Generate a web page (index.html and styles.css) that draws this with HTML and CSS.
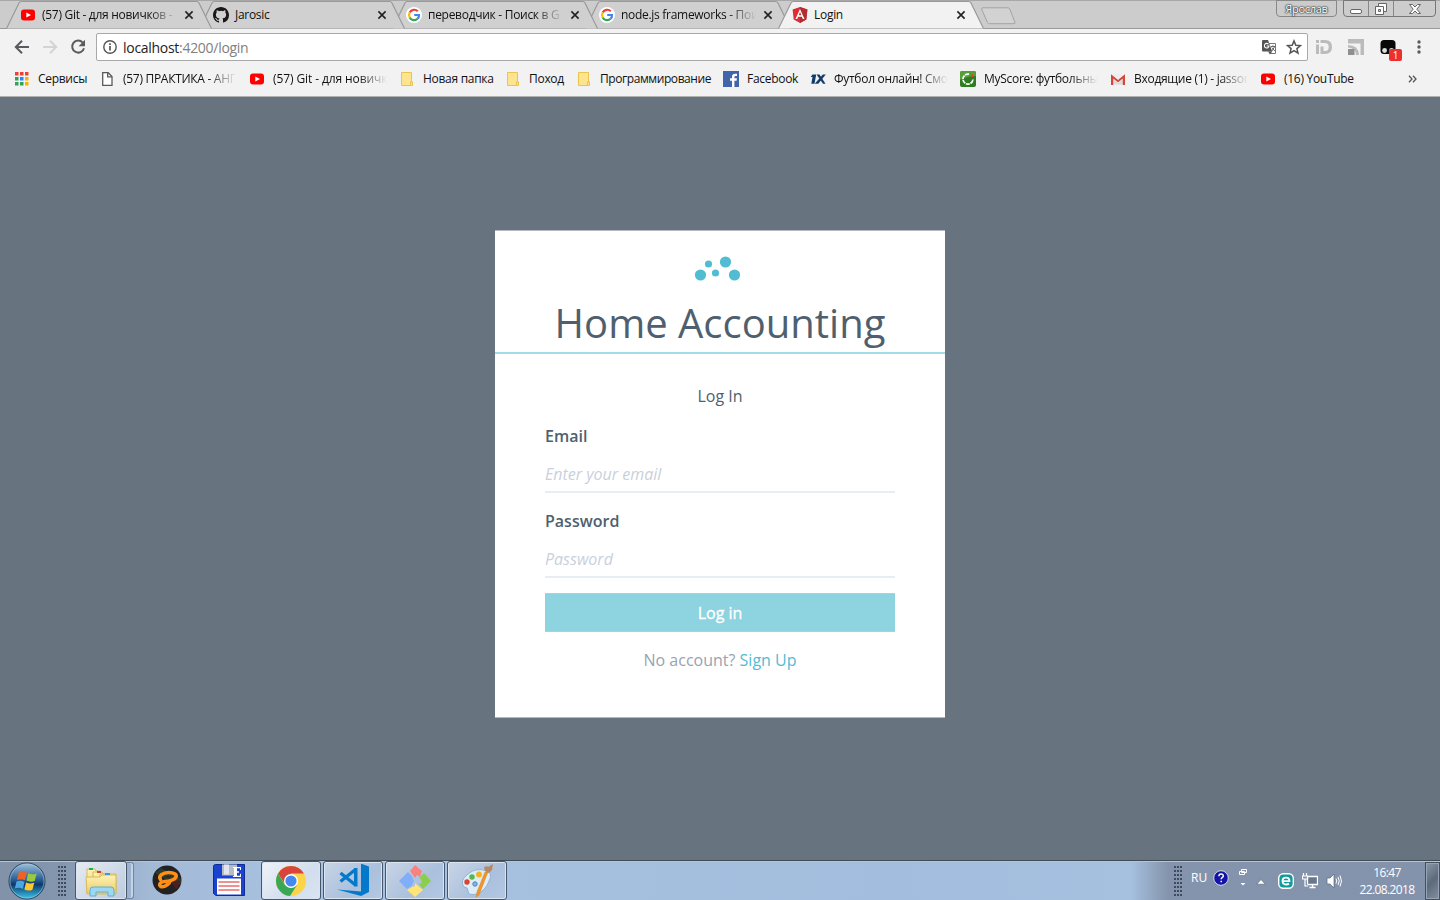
FILE: index.html
```
<!DOCTYPE html>
<html lang="ru">
<head>
<meta charset="utf-8">
<title>Login</title>
<link rel="stylesheet" href="styles.css">
</head>
<body>
<svg class="defs" width="0" height="0">
  <defs>
    <symbol id="yt" viewBox="0 0 16 16"><rect x="1" y="2.5" width="14" height="11" rx="3" fill="#f00"/><path d="M6.3 5.4 11 8 6.3 10.6z" fill="#fff"/></symbol>
    <symbol id="google" viewBox="0 0 16 16"><circle cx="8" cy="8" r="8" fill="#fff"/><g fill="none" stroke-width="2.2"><path d="M11.8 4.3A5 5 0 0 0 3.7 5.6" stroke="#ea4335"/><path d="M3.7 5.6a5 5 0 0 0 0 4.8" stroke="#fbbc05"/><path d="M3.7 10.4a5 5 0 0 0 7.9 1.4" stroke="#34a853"/><path d="M11.6 11.8A5 5 0 0 0 13 8H8.2" stroke="#4285f4"/></g></symbol>
    <symbol id="close" viewBox="0 0 10 10"><path d="M1.4 1.4 8.6 8.6M8.6 1.4 1.4 8.6" stroke="currentColor" stroke-width="1.6"/></symbol>
    <symbol id="folder" viewBox="0 0 16 16"><path d="M2.5 1.5h10v9.3h1v3.7h-11z" fill="#ffe48f" stroke="#e9c44f"/><path d="M11.5 14v-3.2h1.6" fill="none" stroke="#e9c44f"/></symbol>
    <symbol id="tabshape" viewBox="0 0 206 29"><path d="M.5 28.5 13 3q.8-1.5 2.5-1.5h175q1.7 0 2.5 1.5l12.5 25.5" fill="currentColor" stroke="#999" stroke-width="1.2"/></symbol>
    <linearGradient id="gloss" x1="0" y1="0" x2="0" y2="1"><stop offset="0" stop-color="#9fc0dc"/><stop offset=".45" stop-color="#2c6196"/><stop offset=".6" stop-color="#0c3969"/><stop offset="1" stop-color="#3dc7ee"/></linearGradient>
    <linearGradient id="file" x1="0" y1="0" x2="0" y2="1"><stop offset="0" stop-color="#fdf3b5"/><stop offset="1" stop-color="#eccb63"/></linearGradient>
  </defs>
</svg>
<div class="screen">
  <header class="browser">
    <div class="tabstrip">
      <div class="tab tab-1"><svg class="shape"><use href="#tabshape"/></svg><svg class="fav"><use href="#yt"/></svg><span class="title fade">(57) Git - для новичков -</span><svg class="x"><use href="#close"/></svg></div>
      <div class="tab tab-2"><svg class="shape"><use href="#tabshape"/></svg><svg class="fav" viewBox="0 0 16 16"><path fill="#191717" d="M8 0C3.58 0 0 3.58 0 8c0 3.54 2.29 6.53 5.47 7.59.4.07.55-.17.55-.38 0-.19-.01-.82-.01-1.49-2.01.37-2.53-.49-2.69-.94-.09-.23-.48-.94-.82-1.13-.28-.15-.68-.52-.01-.53.63-.01 1.08.58 1.23.82.72 1.21 1.87.87 2.33.66.07-.52.28-.87.51-1.07-1.78-.2-3.64-.89-3.64-3.95 0-.87.31-1.59.82-2.15-.08-.2-.36-1.02.08-2.12 0 0 .67-.21 2.2.82a7.6 7.6 0 0 1 4 0c1.53-1.04 2.2-.82 2.2-.82.44 1.1.16 1.92.08 2.12.51.56.82 1.27.82 2.15 0 3.07-1.87 3.75-3.65 3.95.29.25.54.73.54 1.48 0 1.07-.01 1.93-.01 2.2 0 .21.15.46.55.38A8.01 8.01 0 0 0 16 8c0-4.42-3.58-8-8-8z"/></svg><span class="title">Jarosic</span><svg class="x"><use href="#close"/></svg></div>
      <div class="tab tab-3"><svg class="shape"><use href="#tabshape"/></svg><svg class="fav"><use href="#google"/></svg><span class="title fade">переводчик - Поиск в G</span><svg class="x"><use href="#close"/></svg></div>
      <div class="tab tab-4"><svg class="shape"><use href="#tabshape"/></svg><svg class="fav"><use href="#google"/></svg><span class="title fade">node.js frameworks - Пои</span><svg class="x"><use href="#close"/></svg></div>
      <div class="tab active"><svg class="shape"><use href="#tabshape"/></svg><svg class="fav" viewBox="0 0 16 16"><path d="M8 0 15.4 2.6 14.3 12.4 8 16 1.7 12.4.6 2.6z" fill="#dd2c34"/><path d="M8 0 15.4 2.6 14.3 12.4 8 16z" fill="#b52b32"/><path d="M8 1.9 3.5 12h1.7l.9-2.3h3.8l.9 2.3h1.7zm0 3.2 1.3 3.2H6.7z" fill="#fff"/></svg><span class="title">Login</span><svg class="x"><use href="#close"/></svg></div>
      <svg class="newtab" viewBox="0 0 36 18"><path d="M3 .8h25q1.2 0 1.7 1L35 15.4q.4 1.3-1 1.3H9.5q-1.4 0-2-1.2L1.6 2.2Q1.4.8 3 .8z" fill="#d2d2d2" stroke="#a3a3a3"/></svg>
      <div class="user">Ярослав</div>
      <div class="winbtns">
        <span><svg width="14" height="16" viewBox="0 0 14 16"><rect x="1.5" y="8.5" width="11" height="4" rx="1.5" fill="#fff" stroke="#666"/></svg></span>
        <span><svg width="14" height="16" viewBox="0 0 14 16"><path d="M4.500 2.500h8v8h-8z" fill="#fff" stroke="#666"/><path d="M1.500 5.500h8v8h-8z" fill="#fff" stroke="#666"/><path d="M4.500 8.500h2v2h-2z" fill="#ccc" stroke="#666"/></svg></span>
        <span class="wide"><svg width="14" height="16" viewBox="0 0 14 16"><path d="M1.500 3.500h3L7 6l2.500-2.500h3L8.800 8.200l3.700 4.300h-3L7 10l-2.500 2.500h-3l3.700-4.300z" fill="#fff" stroke="#666"/></svg></span>
      </div>
    </div>
    <div class="toolbar">
      <svg class="nav" viewBox="0 0 16 16"><path d="M15 8H2M8 1.700 1.800 8 8 14.300" fill="none" stroke="#5a5a5f" stroke-width="2"/></svg>
      <svg class="nav" viewBox="0 0 16 16"><path d="M1 8h13M8 1.700 14.200 8 8 14.300" fill="none" stroke="#d3d3d5" stroke-width="2"/></svg>
      <svg class="nav" viewBox="0 0 16 16"><path d="M12.700 3.600A6 6 0 1 0 14 9.200" fill="none" stroke="#5a5a5f" stroke-width="2"/><path d="M15 .8v6.400H8.600z" fill="#5a5a5f"/></svg>
      <div class="omnibox">
        <svg class="info" viewBox="0 0 14 14"><circle cx="7" cy="7" r="6.200" fill="none" stroke="#555" stroke-width="1.400"/><path d="M7 6v4.500M7 3.300v1.700" stroke="#555" stroke-width="1.700"/></svg>
        <span class="url">localhost<i>:4200/login</i></span>
        <svg class="translate" viewBox="0 0 15 15"><path d="M7 3.500h6.500v10H8" fill="#fff" stroke="#777"/><path d="M0 1q0-1 1-1h5l4.200 11.500H1q-1 0-1-1z" fill="#555"/><path d="M6 11.500h4.200L8 14.500z" fill="#555"/><path d="M6.500 4.200A2.300 2.300 0 1 0 7 6H4.700" fill="none" stroke="#fff" stroke-width="1.100"/><path d="M8.800 6.500h4.400M11 5.300v1.200M9.500 11.500l3-4.500M9.800 7.500l3 3.500" stroke="#666" fill="none"/></svg>
        <svg class="star" viewBox="0 0 16 16"><path d="m8 1.900 1.800 4.300 4.700.4-3.600 3 1.100 4.600L8 11.700l-4 2.500 1.100-4.600-3.600-3 4.700-.4z" fill="none" stroke="#555" stroke-width="1.500"/></svg>
      </div>
      <svg class="ext id" viewBox="0 0 16 14"><path d="M0 4.500h3V14H0zM0 0h3v3H0z" fill="#bbb"/><path d="M4.500 0H9q7 0 7 7t-7 7H4.500V6.500h3v4.500H9q3.700 0 3.700-4T9 3H4.500z" fill="#bbb"/></svg>
      <svg class="ext feed" viewBox="0 0 16 16"><path d="M0 0h16v16h-3.500V4.500H0z" fill="#bbb"/><path d="M0 6q10.500 0 11 10H8Q7.500 9 0 8.500z" fill="#bbb"/><path d="M0 10h6.500v6H0z" fill="#8f8f8f"/></svg>
      <div class="ext monkey"><svg viewBox="0 0 16 16" width="16" height="16"><rect x=".5" y="1" width="15" height="14" rx="3.500" fill="#080808"/><circle cx="4.600" cy="11.500" r="2.400" fill="#ddd"/><circle cx="11.500" cy="11.500" r="2.400" fill="#ddd"/></svg><b>1</b></div>
      <svg class="dots" viewBox="0 0 4 14"><circle cx="2" cy="2" r="1.700"/><circle cx="2" cy="7" r="1.700"/><circle cx="2" cy="12" r="1.700"/></svg>
    </div>
    <div class="bookmarks">
      <div class="bm"><svg viewBox="0 0 16 16"><path d="M1 1h3.500v3.500H1zM6 1h3.500v3.500H6zM11 1h3.500v3.500H11z" fill="#ea4335"/><path d="M1 6h3.500v3.500H1z" fill="#34a05a"/><path d="M6 6h3.500v3.500H6z" fill="#2a85f5"/><path d="M11 6h3.500v3.500H11z" fill="#f5b400"/><path d="M1 11h3.500v3.500H1zM6 11h3.500v3.500H6z" fill="#34a05a"/><path d="M11 11h3.500v3.500H11z" fill="#f5b400"/></svg><span>Сервисы</span></div>
      <div class="bm"><svg viewBox="0 0 16 16"><path d="M3.700 1.700h5.500L13 5.500v8.800H3.700z" fill="#fff" stroke="#5a5a5a" stroke-width="1.300"/><path d="M8.700 1.700v4.200H13" fill="none" stroke="#5a5a5a" stroke-width="1.300"/></svg><span class="fade">(57) ПРАКТИКА - АНГ</span></div>
      <div class="bm"><svg><use href="#yt"/></svg><span class="fade loose">(57) Git - для новичк</span></div>
      <div class="bm"><svg><use href="#folder"/></svg><span>Новая папка</span></div>
      <div class="bm"><svg><use href="#folder"/></svg><span>Поход</span></div>
      <div class="bm"><svg><use href="#folder"/></svg><span class="tight">Программирование</span></div>
      <div class="bm"><svg viewBox="0 0 16 16"><path d="M0 0h16v16H0z" fill="#4165ab"/><path d="M9 16V9.700H7V7.300h2V5.800q0-3 3-3h2v2.300h-1.300q-1.300 0-1.300 1.200v1h2.500l-.3 2.400h-2.200V16z" fill="#fff"/></svg><span>Facebook</span></div>
      <div class="bm"><svg viewBox="0 0 16 16"><path d="M2.500 3.500h3.700L4.500 12.700H1.300L2.500 6H.7z" fill="#143c68"/><path d="m6.500 3.500 6.500 9.200h2.500L9.500 3.500z" fill="#143c68"/><path d="M15.800 3.500h-3L4.700 12.700h3.600z" fill="#143c68"/></svg><span class="fade">Футбол онлайн! Смо</span></div>
      <div class="bm"><svg viewBox="0 0 16 16"><rect width="16" height="16" rx="2" fill="#2f7d20"/><path d="M0 2q0-2 2-2h12q2 0 2 2v3Q8 5 0 9z" fill="#55a034"/><path d="M9 3.200A5 5 0 1 0 13 8" fill="none" stroke="#fff" stroke-width="1.700" stroke-dasharray="4 .7"/><path d="m10.800 5.500 1.500-2.800 2 3.200z" fill="#f33"/></svg><span class="fade">MyScore: футбольны</span></div>
      <div class="bm"><svg viewBox="0 0 16 16"><path d="M1 3h14v11H1z" fill="#eee"/><path d="M3 13.500V7.500l5 4 5-4v6z" fill="#ddd"/><path d="M1 14V3.300L8 9l7-5.700V14h-2.200V7.400L8 11.300 3.200 7.400V14z" fill="#d44638"/></svg><span class="fade">Входящие (1) - jassor</span></div>
      <div class="bm"><svg><use href="#yt"/></svg><span>(16) YouTube</span></div>
      <svg class="more" viewBox="0 0 9 8"><path d="m1 .8 3 3.200-3 3.200M5 .8 8 4 5 7.200" fill="none" stroke="#555" stroke-width="1.300"/></svg>
    </div>
  </header>
  <main class="page">
    <section class="card">
      <div class="card-head">
        <svg class="logo" viewBox="0 0 45 25" fill="#52bcd3"><circle cx="5.500" cy="19" r="5.600"/><circle cx="13.500" cy="8" r="3.600"/><circle cx="20.500" cy="17" r="3.600"/><circle cx="30.500" cy="6" r="5.600"/><circle cx="39.500" cy="19" r="5.600"/></svg>
        <h1>Home Accounting</h1>
      </div>
      <form class="card-body">
        <p class="lead">Log In</p>
        <label>Email</label>
        <input type="text" placeholder="Enter your email">
        <label>Password</label>
        <input type="password" placeholder="Password">
        <button type="button">Log in</button>
        <p class="alt">No account? <a>Sign Up</a></p>
      </form>
    </section>
  </main>
  <footer class="taskbar">
    <svg class="start" viewBox="0 0 38 38"><circle cx="19" cy="19" r="18" fill="url(#gloss)" stroke="#28465f"/><circle cx="19" cy="19" r="17" fill="none" stroke="#a9cbe0" stroke-opacity=".6"/><path d="M10.800 10.500q4-2 8 .3l-1.800 7.500q-4-2-8-.4z" fill="#ee6323"/><path d="M20.200 11.300q4 2 8.500.2l-2 7.400q-4 1.700-8.200-.3z" fill="#9aca3c"/><path d="M8.500 19.500q4-1.500 8 .4l-1.700 7q-3.700-2-8-.4z" fill="#4ba7e2"/><path d="M18 20.400q4 2 8.300.3l-1.900 7q-4 1.800-8-.2z" fill="#fdc72d"/></svg>
    <i class="grip"></i>
    <div class="task explorer on"><svg width="34" height="34" viewBox="0 0 34 34"><path d="M3 5h8l1 2h4V29H3z" fill="url(#file)" stroke="#d8b95b"/><path d="M9 8h9l1 2h5v19H9z" fill="url(#file)" stroke="#d8b95b"/><path d="M16 10h16v19H16z" fill="url(#file)" stroke="#d8b95b"/><path d="M2 13h14l2-2h14v19H3z" fill="url(#file)" stroke="#d8b95b"/><path d="M5 4h4v2H5z" fill="#22b24c"/><path d="M13 7h4v2h-4z" fill="#d44131"/><path d="M21 9h5v2h-5z" fill="#389be8"/><path d="M6 32v-6q0-3 3-3h18q3 0 3 3v6h-6v-4H12v4z" fill="#9bd9f3" stroke="#5caedb"/></svg></div>
    <i class="stack"></i>
    <svg class="quick aimp" viewBox="0 0 30 30"><circle cx="15" cy="15" r="14.500" fill="#222"/><path d="M3 8 9 3l20 11v5l-6 1z" fill="#2d3b2b"/><path d="m19 17 9-2q0 6-4 9z" fill="#4d1e22"/><path d="M8.500 14.500C6 11 11 7.500 16.500 7.500s8.500 2 7.500 4.500-6 4.500-11.500 4.500c-4 0-6 3.500-4 4.800 2.500 1.200 6.500-.3 9-3.600" fill="none" stroke="#ff8f15" stroke-width="3.600" stroke-linecap="round"/><path d="M12 12.500q3-2.300 7.500-1.300-2 2.300-7.500 1.300z" fill="#3a251c"/></svg>
    <svg class="quick floppy" viewBox="0 0 32 32"><path d="M.5 2.500q0-2 2-2h29v31H3l-2.500-2z" fill="#1a43d0" stroke="#122b8e"/><path d="M9 .5h15v11H9z" fill="#b5bdc9"/><path d="M11 .5h5v10h-5z" fill="#e2e6ec"/><path d="M4 14.500h24v16H4z" fill="#fff"/><path d="M5.500 18h21M5.500 22h21M5.500 26h21" stroke="#d22"/><path d="M20 3h8v3h-1V4.300h-3v3h2v1.400h-2v3h3v-2h1v3.300h-8v-1h1V4h-1z" fill="#fff"/></svg>
    <div class="task on"><svg width="32" height="32" viewBox="0 0 32 32"><circle cx="16" cy="16" r="15" fill="#fdd348"/><path d="M3 8.500A15 15 0 0 1 29 8.500H16L10 19z" fill="#d8453a"/><path d="M3 8.500A15 15 0 0 0 15 31l7-11H10z" fill="#3aa757"/><circle cx="16" cy="16" r="7" fill="#fff"/><circle cx="16" cy="16" r="5.600" fill="#4688f1"/></svg></div>
    <div class="task"><svg width="34" height="34" viewBox="0 0 34 34"><path d="M25 0h1l7 2.500v25.500l-8 4L1 25.500l24 2z" fill="#0479cb"/><path d="M18 4h3.500v18.500H18z" fill="#0479cb"/><path d="M19.500 5.500 4.500 17.500M19.500 21 4.500 9" stroke="#0479cb" stroke-width="3.300"/></svg></div>
    <div class="task"><svg width="34" height="34" viewBox="0 0 34 34"><path d="m17 1 7 6-2 6-3-2-2 3-5-7z" fill="#f78381"/><path d="m10 8 3.500 3.500L16 17l-2.500 5L9 25l-8-8z" fill="#80aefa"/><path d="m26 9 7 8-8 8-4-5 3-1-1-4-2-1z" fill="#8bce4a"/><path d="m17 19 8 7-8 7-8-7 5-3 3-1z" fill="#ffe477"/></svg></div>
    <div class="task"><svg width="34" height="34" viewBox="0 0 34 34"><path d="M8 10q8-7 19-3 6 3 2 10-3 9-12 13-9 2-9-3 0-4-4-4-5-6 4-13z" fill="#dcecf8" stroke="#8db6d6"/><circle cx="7" cy="18" r="2.700" fill="#dc4430"/><circle cx="12" cy="13" r="2.700" fill="#55b848"/><circle cx="19" cy="10.500" r="2.900" fill="#f7b218"/><circle cx="15" cy="20" r="2.200" fill="#8cb6dc" stroke="#4c82b2"/><path d="m28 8-9 23-3 2 1-5 8-20z" fill="#f39427" stroke="#d9832a" stroke-width=".5"/><path d="m24 3 3-1 1 1 5-3-1 6-3 3-4-2z" fill="#b58a63"/></svg></div>
    <i class="grip right"></i>
    <span class="lang">RU</span>
    <svg class="help" viewBox="0 0 16 16"><circle cx="8" cy="8" r="7.300" fill="#1414a8" stroke="#d5d9e6"/><path d="M5.900 6.200q0-2.200 2.200-2.200t2.200 2q0 1-1.200 1.700-.9.500-.9 1.600M8.200 10.700v1.600" fill="none" stroke="#fff" stroke-width="1.500"/></svg>
    <svg class="restore" viewBox="0 0 8 18"><path d="M2.500.5h5v3h-5zM.5 2.500h5v3h-5z" fill="#8493ac" stroke="#fff"/><path d="M1.500 14h5L4 16.500z" fill="#fff"/></svg>
    <svg class="up" viewBox="0 0 10 6"><path d="m5 .5 4.300 4.700H.7z" fill="#fff" stroke="#566379" stroke-width=".6"/></svg>
    <svg class="eset" viewBox="0 0 16 16"><rect x=".7" y=".7" width="14.600" height="14.600" rx="4.500" fill="#109a9c" stroke="#fff" stroke-width="1.400"/><path d="M4.500 8.200h7q0-3.500-3.500-3.500T4.500 8t3.500 3.500q2 0 3-1" fill="none" stroke="#fff" stroke-width="1.800"/></svg>
    <svg class="net" viewBox="0 0 16 16"><path d="M5.500 3.500h10v8h-10zM7.500 14.500h6M10.500 12v2" fill="#68778e" stroke="#fff" stroke-width="1.300"/><path d="M1.500 0v3M4.500 0v3M.5 3h5v3h-5zM3 6v7h3" fill="#8493ac" stroke="#fff" stroke-width="1.200"/></svg>
    <svg class="vol" viewBox="0 0 16 16"><path d="M1 5h3l4-4v14l-4-4H1z" fill="#fff" stroke="#59667b" stroke-width=".7"/><path d="M10 5.500q1.600 2.500 0 5M12 4q2.500 4 0 8M14 2.500q3 5.500 0 11" fill="none" stroke="#fff"/></svg>
    <div class="clock"><span>16:47</span><span>22.08.2018</span></div>
    <i class="peek"></i>
  </footer>
</div>
</body>
</html>
```
FILE: styles.css
```
* { box-sizing: border-box; }
body { margin: 0; font-family: "Open Sans", "Noto Sans", sans-serif; }
svg { display: block; flex: none; }
.defs { position: absolute; }
.screen { width: 1440px; height: 900px; display: flex; flex-direction: column; overflow: hidden; }

.browser { height: 97px; flex: none; background: #f2f2f2; border-bottom: 1px solid #b0b0b0; font-size: 12px; letter-spacing: -.29px; color: #111; }
.tabstrip { height: 29px; display: flex; background: #ccc; padding-left: 6px; border-bottom: 1px solid #999; border-top: 1px solid #a8a8a8; }
.tab { position: relative; width: 206px; height: 29px; margin: -1px -13px 0 0; flex: none; display: flex; align-items: center; padding: 1px 0 0 14px; color: #d0d0d0; }
.tab .shape { position: absolute; left: 0; top: 0; width: 206px; height: 29px; }
.tab-1 { z-index: 4; } .tab-2 { z-index: 3; } .tab-3 { z-index: 2; } .tab-4 { z-index: 1; }
.active { z-index: 5; color: #f2f2f2; }
.fav { position: relative; width: 16px; height: 16px; }
.title { position: relative; width: 135px; margin-left: 6px; color: #111; white-space: nowrap; line-height: 18px; }
.x { position: relative; width: 10px; height: 10px; margin-left: 7px; color: #222; }
.fade { -webkit-mask-image: linear-gradient(90deg, #000 calc(100% - 28px), transparent); mask-image: linear-gradient(90deg, #000 calc(100% - 28px), transparent); }
.newtab { width: 36px; height: 18px; margin: 6px 0 0 9px; }
.user { margin-left: auto; width: 61px; height: 17px; margin-top: -1px; border: 1px solid #888; border-radius: 0 0 4px 4px; text-align: center; line-height: 16px; font-size: 11px; color: #fff; text-shadow: 0 0 1px #444, 0 0 1px #444, 0 0 2px #444, 0 0 2px #444; }
.winbtns { display: flex; margin: -1px 4px 0 6px; width: 93px; height: 17px; border: 1px solid #777; border-radius: 0 0 4px 4px; }
.winbtns span { width: 25px; display: flex; justify-content: center; border-right: 1px solid #888; }
.winbtns .wide { flex: 1; border: 0; }

.toolbar { height: 36px; display: flex; align-items: center; padding: 0 19px 0 14px; }
.nav { width: 16px; height: 16px; margin-right: 12px; }
.omnibox { width: 1212px; height: 28px; margin-left: -2px; border: 1px solid #a9a9a9; border-radius: 2px; background: #fff; display: flex; align-items: center; padding: 0 5px 0 6px; font-size: 14px; }
.info { width: 14px; height: 14px; }
.url { margin-left: 6px; color: #222; }
.url i { font-style: normal; color: #808080; }
.translate { width: 15px; height: 15px; margin-left: auto; }
.star { width: 16px; height: 16px; margin-left: 9px; }
.ext { width: 16px; height: 16px; margin-left: 16px; }
.ext.id { margin-left: 8px; height: 14px; }
.monkey { position: relative; }
.monkey b { position: absolute; left: 9px; top: 10px; width: 13px; height: 12px; border-radius: 2px; background: #ee2f2f; color: #fff; font-size: 10px; font-weight: 400; line-height: 12px; text-align: center; }
.dots { width: 4px; height: 14px; margin-left: auto; fill: #5a5a5a; }

.bookmarks { height: 28px; display: grid; grid-template-columns: 85px 150px 150px 106px 71px 147px 87px 150px 150px 150px 148px 9px; padding-left: 14px; align-items: center; }
.bm { display: flex; align-items: center; gap: 8px; }
.bm svg { width: 16px; height: 16px; }
.bm span { white-space: nowrap; line-height: 18px; }
.bm .tight { letter-spacing: -.42px; }
.bm .loose { letter-spacing: -.1px; }
.more { width: 9px; height: 8px; }

.page { flex: 1; background: #67737f; display: flex; justify-content: center; align-items: flex-start; padding-top: 133px; }
.card { width: 450px; height: 488px; background: #fff; border-top: 1px solid #b3b9bf; border-bottom: 1px solid #b3b9bf; color: #4f5f6f; }
.card-head { height: 123px; border-bottom: 2px solid #a2dce8; padding-top: 25px; display: flex; flex-direction: column; align-items: center; }
.logo { width: 45px; height: 25px; margin-right: 5px; }
h1 { margin: 14px 0 0; font-weight: 400; font-size: 40px; line-height: 56px; white-space: nowrap; }
.card-body { padding: 30px 50px 0; display: flex; flex-direction: column; font-size: 16px; line-height: 24px; }
.lead { margin: 0 0 16px; text-align: center; }
label { font-weight: 600; }
input { font: inherit; height: 45px; margin: 0 0 16px; padding: 11px 0 3px; border: 0; border-bottom: 2px solid #e8edf1; outline: 0; background: none; }
input::placeholder { color: #c9d0dc; font-style: italic; opacity: 1; }
button { height: 39px; margin: -1px 0 0; padding: 2px 0 0; border: 1px solid #9ad8e4; border-width: 1px 0; background: #8dd3e0; color: #fff; font: 500 16px/35px "Open Sans", sans-serif; -webkit-text-stroke: .3px #fff; }
.alt { margin: 16px 0 0; text-align: center; color: #98a3b2; }
.alt a { color: #52bcd3; }

.taskbar { height: 40px; flex: none; display: flex; align-items: center; border-top: 1px solid #414b56; box-shadow: inset 0 1px #b5c4d6; background: linear-gradient(90deg, #8192a9 0, #8496ae 60px, #a3bad7 150px, #a8c2e0 300px, #a2bddd 900px, #a6c1e0 1130px, #8494ac 1168px, #8493ac 100%); }
.start { width: 38px; height: 38px; margin-left: 8px; }
.grip { width: 8px; height: 30px; margin-left: 12px; background: radial-gradient(circle at 1px 1px, #3f4c5e 1px, transparent 1.300px) 0 0 / 3px 4px; }
.task { width: 60px; height: 39px; margin-right: 2px; border: 1px solid #46566b; border-radius: 3px; box-shadow: inset 0 0 0 1px #dbe5f1; background: linear-gradient(135deg, #c8d5e6, #abc0dc 60%, #b2c8e3); display: flex; align-items: center; justify-content: center; }
.task.on { background: linear-gradient(135deg, #eff3f8, #d2deed 60%, #dae5f3); }
.task.explorer { width: 52px; margin: 0 0 0 9px; background: linear-gradient(135deg, #e6ebf2, #bccbe0); }
.stack { width: 7px; height: 37px; border: 1px solid #72869f; border-left: 0; border-radius: 0 3px 3px 0; box-shadow: inset -2px 0 #c4d4e7; }
.aimp { width: 30px; height: 30px; margin-left: 18px; margin-top: -1px; }
.floppy { width: 32px; height: 32px; margin: -2px 16px 0 31px; }
.grip.right { margin-left: auto; }
.lang { margin-left: 9px; width: 18px; font-size: 12px; color: #fff; margin-top: -6px; }
.help { width: 16px; height: 16px; margin: -5px 0 0 4px; }
.restore { width: 8px; height: 18px; margin: -5px 0 0 10px; }
.up { width: 10px; height: 6px; margin: 3px 0 0 9px; }
.eset { width: 16px; height: 16px; margin-left: 12px; }
.net { width: 16px; height: 16px; margin-left: 8px; }
.vol { width: 16px; height: 16px; margin-left: 8px; }
.clock { width: 72px; margin-left: 9px; display: flex; flex-direction: column; align-items: center; color: #fff; font-size: 12px; letter-spacing: -.6px; line-height: 17px; white-space: nowrap; }
.peek { width: 15px; height: 38px; margin-left: 2px; border: 1px solid #44505e; box-shadow: inset 0 0 0 1px #96a4b5; background: linear-gradient(135deg, #8b98a9, #5c6a7c 50%, #8390a2); }
```
